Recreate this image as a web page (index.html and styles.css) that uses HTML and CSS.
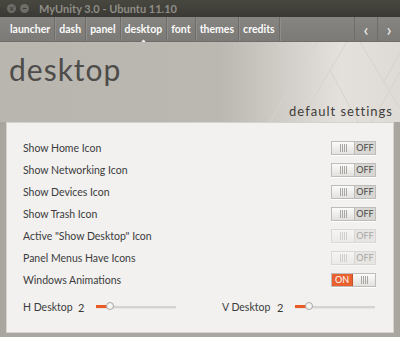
FILE: index.html
```html
<!DOCTYPE html>
<html lang="en">
<head>
    <meta charset="UTF-8">
    <title>MyUnity 3.0 - Ubuntu 11.10</title>
    <link rel="stylesheet" href="styles.css">
</head>
<body>
    <div class="window">
        <div class="titlebar">
            <span class="wbtn">&times;</span>
            <span class="wbtn">&minus;</span>
            <span class="title">MyUnity 3.0 - Ubuntu 11.10</span>
        </div>

        <div class="tabs">
            <span class="tab first">launcher</span>
            <span class="tab">dash</span>
            <span class="tab">panel</span>
            <span class="tab active">desktop</span>
            <span class="tab">font</span>
            <span class="tab">themes</span>
            <span class="tab">credits</span>
            <span class="spacer"></span>
            <span class="arrow">&#x2039;</span>
            <span class="arrow">&#x203A;</span>
        </div>

        <div class="header">
            <svg class="lines" width="400" height="80" viewBox="0 0 400 80">
                <g stroke="#d6d2cc" stroke-width="1" fill="none">
                    <path d="M270 80 L317 0"/>
                    <path d="M300 80 L330 28 L358 80"/>
                    <path d="M330 28 L347 0"/>
                    <path d="M360 0 L384 40 L400 10"/>
                    <path d="M372 80 L400 30"/>
                    <path d="M384 40 L408 80"/>
                </g>
            </svg>
            <h1>desktop</h1>
            <div class="subtitle">default settings</div>
        </div>

        <div class="panel">
            <div class="row">
                <span class="label">Show Home Icon</span>
                <span class="switch"><span class="grip"><i></i></span><span class="state">OFF</span></span>
            </div>
            <div class="row">
                <span class="label">Show Networking Icon</span>
                <span class="switch"><span class="grip"><i></i></span><span class="state">OFF</span></span>
            </div>
            <div class="row">
                <span class="label">Show Devices Icon</span>
                <span class="switch"><span class="grip"><i></i></span><span class="state">OFF</span></span>
            </div>
            <div class="row">
                <span class="label">Show Trash Icon</span>
                <span class="switch"><span class="grip"><i></i></span><span class="state">OFF</span></span>
            </div>
            <div class="row">
                <span class="label">Active "Show Desktop" Icon</span>
                <span class="switch disabled"><span class="grip"><i></i></span><span class="state">OFF</span></span>
            </div>
            <div class="row">
                <span class="label">Panel Menus Have Icons</span>
                <span class="switch disabled"><span class="grip"><i></i></span><span class="state">OFF</span></span>
            </div>
            <div class="row">
                <span class="label">Windows Animations</span>
                <span class="switch on"><span class="state">ON</span><span class="grip"><i></i></span></span>
            </div>

            <div class="sliders">
                <div class="slider-group">
                    <span class="label">H Desktop</span>
                    <span class="value">2</span>
                    <span class="slider"><span class="fill"></span><span class="thumb"></span></span>
                </div>
                <div class="slider-group">
                    <span class="label">V Desktop</span>
                    <span class="value">2</span>
                    <span class="slider"><span class="fill"></span><span class="thumb"></span></span>
                </div>
            </div>
        </div>
    </div>
</body>
</html>
```

FILE: styles.css
```css
body {
    margin: 0;
    font-family: Lato, 'Noto Sans', sans-serif;
    background: #a9a59f;
}
.window {
    width: 400px;
    height: 337px;
    overflow: hidden;
    background: #a9a59f;
}
.titlebar {
    height: 17px;
    background: linear-gradient(#48473f, #3a3935);
    display: flex;
    align-items: center;
    padding-left: 5px;
    gap: 2px;
}
.wbtn {
    width: 9px;
    height: 9px;
    border-radius: 50%;
    background: #6e6d68;
    color: #3e3d39;
    font-size: 9px;
    line-height: 9px;
    text-align: center;
    font-weight: bold;
    margin-left: 2px;
}
.title {
    margin-left: 8px;
    color: #8f8d86;
    font-size: 11px;
    font-weight: bold;
}
.tabs {
    height: 25px;
    background: linear-gradient(#868582, #7b7a77);
    display: flex;
    align-items: stretch;
    border-bottom: 1px solid #6f6e6b;
    box-sizing: border-box;
}
.tab {
    display: flex;
    align-items: center;
    padding: 0 4px;
    color: #fbfbfa;
    font-size: 10.5px;
    font-weight: bold;
    border-right: 1px solid #6e6d6a;
    box-shadow: 1px 0 0 #8e8d8a;
    position: relative;
}
.tab.first {
    padding-left: 10px;
}
.tab.active::after {
    content: '';
    position: absolute;
    left: 50%;
    bottom: -2px;
    width: 3px;
    height: 3px;
    margin-left: -1px;
    background: #eeeeee;
    transform: rotate(45deg);
}
.spacer {
    flex: 1;
    border-right: 1px solid #6e6d6a;
}
.arrow {
    width: 22px;
    display: flex;
    align-items: center;
    justify-content: center;
    color: #f4f4f3;
    font-size: 18px;
    border-right: 1px solid #6e6d6a;
}
.arrow:last-child {
    border-right: none;
}
.header {
    height: 80px;
    position: relative;
    background: linear-gradient(90deg, #b9b5af 0%, #bbb7b1 55%, #e4e1dc 85%, #dedad5 100%);
    box-sizing: border-box;
    padding: 10px 10px 0 9px;
}
.lines {
    position: absolute;
    left: 0;
    top: 0;
}
.header h1 {
    margin: 0;
    font-weight: normal;
    font-size: 30px;
    letter-spacing: 1px;
    color: #4d4c49;
    line-height: 34px;
    position: relative;
}
.subtitle {
    position: absolute;
    right: 7px;
    bottom: 3px;
    font-size: 13px;
    letter-spacing: 1px;
    color: #3e3d3b;
}
.panel {
    margin: 0 6px;
    height: 211px;
    background: #f2f1f0;
    border: 1px solid #d6d3ce;
    box-sizing: border-box;
    padding: 14px 17px 0 16px;
}
.row {
    height: 22px;
    display: flex;
    align-items: center;
    justify-content: space-between;
}
.label {
    font-size: 10.5px;
    color: #3c3c3c;
    white-space: nowrap;
}
.switch {
    width: 45px;
    height: 14px;
    display: flex;
    border: 1px solid #bebcb8;
    box-sizing: border-box;
    font-size: 9px;
    box-shadow: 0 1px 0 #ffffff;
}
.grip {
    width: 22px;
    background: linear-gradient(#fbfbfa, #e2e1de);
    display: flex;
    align-items: center;
    justify-content: center;
}
.grip i {
    width: 7px;
    height: 8px;
    background: repeating-linear-gradient(90deg, #a9a7a3 0 1px, transparent 1px 2px);
}
.state {
    flex: 1;
    background: #d9d7d3;
    color: #4a4a48;
    text-align: center;
    line-height: 12px;
    border-left: 1px solid #bebcb8;
}
.switch.disabled {
    opacity: 0.45;
}
.switch.on .state {
    background: #ea6130;
    color: #ffffff;
    border-left: none;
    border-right: 1px solid #c4502a;
}
.sliders {
    display: flex;
    margin-top: 6px;
    gap: 46px;
}
.slider-group {
    display: flex;
    align-items: center;
    height: 20px;
}
.slider-group .label {
    width: 48px;
}
.value {
    font-size: 11px;
    color: #3c3c3c;
    margin-left: 7px;
    width: 18px;
}
.slider {
    width: 80px;
    height: 2px;
    background: #d5d3cf;
    position: relative;
    border-bottom: 1px solid #e6e5e2;
}
.fill {
    position: absolute;
    left: 0;
    top: -1px;
    width: 12px;
    height: 3px;
    background: #e95c27;
}
.thumb {
    position: absolute;
    left: 10px;
    top: -4px;
    width: 8px;
    height: 8px;
    border-radius: 50%;
    background: #f6f6f5;
    border: 1px solid #a8a6a2;
    box-sizing: border-box;
}
```
